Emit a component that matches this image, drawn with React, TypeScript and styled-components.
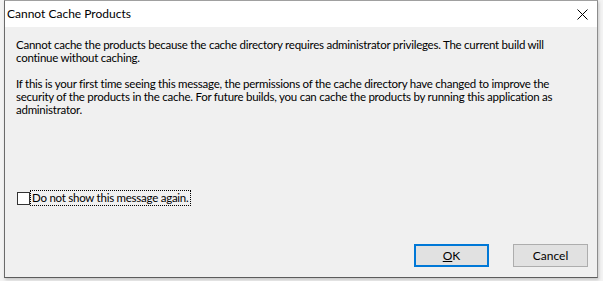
import styled, { createGlobalStyle } from 'styled-components';

const GlobalStyle = createGlobalStyle`
  html, body {
    margin: 0;
    padding: 0;
    background: #f3f3f3;
  }
  body {
    font-family: Lato, "Liberation Sans", Arial, sans-serif;
    font-size: 11.5px;
    letter-spacing: -0.25px;
    color: #000;
  }
`;

const Page = styled.div`
  width: 603px;
  height: 281px;
  padding: 0 5px 3px 4px;
  box-sizing: border-box;
  display: flex;
`;

const DialogWindow = styled.div`
  width: 594px;
  min-width: 0;
  overflow: hidden;
  box-sizing: border-box;
  display: flex;
  flex-direction: column;
  background: #f0f0f0;
  border: 1px solid;
  border-color: #a0a0a0 #8c8c8c #5c5c5c #6a6a6a;
  box-shadow: 1px 2px 3px rgba(0, 0, 0, 0.18);
`;

const TitleBar = styled.div`
  height: 26px;
  background: #fff;
  display: flex;
  align-items: center;
  justify-content: space-between;
  padding-left: 2px;
`;

const Title = styled.span`
  font-size: 12px;
  letter-spacing: 0;
  margin-top: -1px;
`;

const CloseButton = styled.div`
  width: 30px;
  height: 26px;
  display: flex;
  align-items: center;
  justify-content: center;
`;

const Body = styled.div`
  flex: 1;
  display: flex;
  flex-direction: column;
  padding: 11px 9px 10px 11px;
`;

const Message = styled.div`
  flex: 1;
`;

const Paragraph = styled.p`
  margin: 0 0 13px;
  line-height: 13px;
  white-space: nowrap;
`;

const CheckRow = styled.label`
  display: flex;
  align-items: center;
  gap: 1px;
  padding-left: 1px;
`;

const Box = styled.span`
  width: 11px;
  height: 11px;
  border: 1px solid #333;
  background: #fff;
`;

const FocusLabel = styled.span`
  outline: 1px dotted #000;
  padding: 0 1px 0 1px;
  line-height: 14px;
`;

const ButtonRow = styled.div`
  display: flex;
  justify-content: flex-end;
  gap: 24px;
  margin-top: 39px;
`;

const Button = styled.button<{ $default?: boolean }>`
  width: 75px;
  height: 23px;
  box-sizing: border-box;
  background: #e1e1e1;
  border: ${(p) => (p.$default ? '2px solid #0078d7' : '1px solid #adadad')};
  font-family: Lato, "Liberation Sans", Arial, sans-serif;
  font-size: 12px;
  color: #000;
  padding: 0;
`;

const Mnemonic = styled.span`
  text-decoration: underline;
`;

const App = () => {
  return (
    <>
      <GlobalStyle />
      <Page>
        <DialogWindow>
          <TitleBar>
            <Title>Cannot Cache Products</Title>
            <CloseButton>
              <svg width="11" height="11" viewBox="0 0 11 11">
                <path d="M0.5 0.5 L10.5 10.5 M10.5 0.5 L0.5 10.5" stroke="#000" strokeWidth="1" fill="none" />
              </svg>
            </CloseButton>
          </TitleBar>
          <Body>
            <Message>
              <Paragraph>
                Cannot cache the products because the cache directory requires administrator privileges. The current build will
                <br />
                continue without caching.
              </Paragraph>
              <Paragraph>
                If this is your first time seeing this message, the permissions of the cache directory have changed to improve the
                <br />
                security of the products in the cache. For future builds, you can cache the products by running this application as
                <br />
                administrator.
              </Paragraph>
            </Message>
            <CheckRow>
              <Box />
              <FocusLabel>Do not show this message again.</FocusLabel>
            </CheckRow>
            <ButtonRow>
              <Button $default>
                <Mnemonic>O</Mnemonic>K
              </Button>
              <Button>Cancel</Button>
            </ButtonRow>
          </Body>
        </DialogWindow>
      </Page>
    </>
  );
};

export default App;
